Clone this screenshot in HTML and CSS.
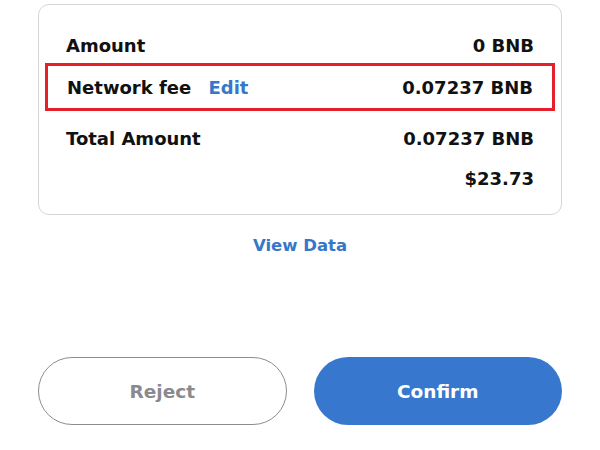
FILE: index.html
```html
<!DOCTYPE html>
<html>
<head>
  <meta charset="UTF-8">
  <title>Confirm transaction</title>
  <link rel="stylesheet" href="styles.css">
</head>
<body>
  <div class="page">
    <div class="summary-card">
      <div class="row">
        <span class="label">Amount</span>
        <span class="value">0 BNB</span>
      </div>
      <div class="row fee-row">
        <span class="label">Network fee <a class="edit-link" href="#">Edit</a></span>
        <span class="value">0.07237 BNB</span>
      </div>
      <div class="row total-row">
        <span class="label">Total Amount</span>
        <span class="value">0.07237 BNB</span>
      </div>
      <div class="row fiat-row">
        <span class="value">$23.73</span>
      </div>
    </div>

    <a class="view-data" href="#">View Data</a>

    <div class="actions">
      <button class="btn btn-reject">Reject</button>
      <button class="btn btn-confirm">Confirm</button>
    </div>
  </div>
</body>
</html>
```

FILE: styles.css
```css
body {
  font-family: 'DejaVu Sans', 'Liberation Sans', sans-serif;
  margin: 0;
  background: white;
  color: #111;
}
.page {
  padding: 4px 38px 0 38px;
}
.summary-card {
  border: 1px solid #d6d6d6;
  border-radius: 11px;
  padding: 27px 27px 22px 27px;
  height: 160px;
}
.row {
  display: flex;
  justify-content: space-between;
  align-items: center;
  font-size: 18px;
  font-weight: 700;
  height: 26px;
}
.fee-row {
  margin: 5px -21px 0 -21px;
  padding: 0 19px 0 19px;
  height: 42px;
  border: 3px solid #e3202b;
}
.total-row {
  margin-top: 14px;
}
.fiat-row {
  justify-content: flex-end;
  margin-top: 14px;
}
.edit-link {
  color: #3777c8;
  text-decoration: none;
  margin-left: 11px;
}
.view-data {
  display: block;
  text-align: center;
  color: #3777c8;
  font-size: 16.5px;
  font-weight: 700;
  text-decoration: none;
  margin-top: 21px;
}
.actions {
  display: grid;
  grid-template-columns: 1fr 1fr;
  gap: 27px;
  margin-top: 102px;
}
.btn {
  height: 68px;
  border-radius: 34px;
  font-family: inherit;
  font-size: 18.5px;
  font-weight: 700;
  cursor: pointer;
}
.btn-reject {
  background: white;
  color: #8a8a8e;
  border: 1.5px solid #8c8c8c;
}
.btn-confirm {
  background: #3777cd;
  color: white;
  border: none;
}
```
